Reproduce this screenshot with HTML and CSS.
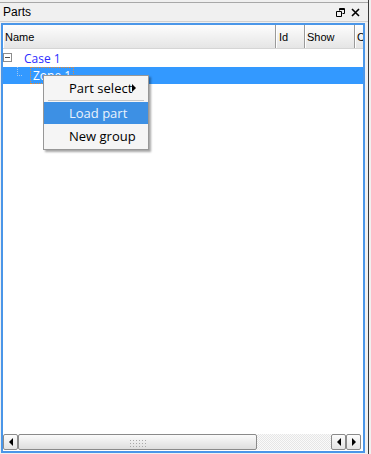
FILE: index.html
```html
<!DOCTYPE html>
<html lang="en">
<head>
    <meta charset="UTF-8">
    <title>Parts</title>
    <link rel="stylesheet" href="styles.css">
</head>
<body>
    <div class="window">
        <div class="titlebar">
            <span class="title">Parts</span>
            <span class="title-btns">
                <svg width="9" height="9" viewBox="0 0 9 9"><path d="M3.5 0.5h5v5h-2M3.5 0.5v2M0.5 3.5h5v5h-5z M3.5 1.5h5" fill="none" stroke="#000" stroke-width="1"/></svg>
                <svg width="9" height="9" viewBox="0 0 9 9"><path d="M1 1L8 8M8 1L1 8" stroke="#000" stroke-width="1.6"/></svg>
            </span>
        </div>
        <div class="panel">
            <div class="header">
                <div class="col col-name">Name</div>
                <div class="col col-id">Id</div>
                <div class="col col-show">Show</div>
                <div class="col col-c">C</div>
            </div>
            <div class="tree">
                <div class="row">
                    <span class="expander"></span>
                    <span class="case">Case 1</span>
                </div>
                <div class="row selected">
                    <span class="branch"></span>
                    <span class="focus">Zone 1</span>
                </div>
            </div>
            <div class="hscroll">
                <div class="sbtn"><span class="arr-left"></span></div>
                <div class="thumb"><span class="grip"></span></div>
                <div class="track"></div>
                <div class="sbtn"><span class="arr-left"></span></div>
                <div class="sbtn"><span class="arr-right"></span></div>
            </div>
        </div>
    </div>

    <div class="menu">
        <div class="item">Part select<span class="sub"></span></div>
        <div class="sep"></div>
        <div class="item active">Load part</div>
        <div class="item last">New group</div>
    </div>
</body>
</html>
```

FILE: styles.css
```css
body {
    margin: 0;
    background-color: #f0f0f0;
    font-family: "Liberation Sans", Arial, sans-serif;
    font-size: 11px;
}
.window {
    width: 368px;
    height: 454px;
    border-right: 1px solid #3a3a3a;
    box-sizing: content-box;
    padding-top: 2px;
}
.titlebar {
    height: 18px;
    border-top: 1px solid #a8a8a8;
    border-bottom: 1px solid #d0d0d0;
    display: flex;
    align-items: center;
    justify-content: space-between;
    padding: 0 8px 0 3px;
}
.title {
    font-size: 12px;
}
.title-btns {
    display: flex;
    gap: 6px;
    padding-top: 1px;
}
.panel {
    margin: 1px 3px 0 1px;
    height: 425px;
    border: 2px solid #4a96e8;
    background: #fff;
    display: flex;
    flex-direction: column;
    padding-bottom: 1px;
    overflow: hidden;
}
.header {
    display: flex;
    height: 23px;
    border-bottom: 1px solid #d5d5d5;
    background: linear-gradient(#fdfdfd, #f1f1f1 50%, #e5e5e5);
}
.col {
    display: flex;
    align-items: center;
    padding-left: 2px;
    border-right: 1px solid #9a9a9a;
    box-shadow: inset 1px 0 #ffffff;
    flex-shrink: 0;
}
.col-name { width: 270px; }
.col-id { width: 25px; padding-left: 3px; }
.col-show { width: 47px; }
.col-c { width: 20px; border-right: none; }
.tree {
    flex: 1;
    padding-top: 1px;
    font-family: "Open Sans", "Noto Sans", sans-serif;
    font-size: 12px;
}
.row {
    height: 17px;
    display: flex;
    align-items: center;
    position: relative;
}
.expander {
    width: 7px;
    height: 7px;
    border: 1px solid #8c8c8c;
    margin-top: -3px;
    display: flex;
    align-items: center;
    justify-content: center;
}
.expander::before {
    content: "";
    width: 5px;
    height: 1px;
    background: #505050;
}
.case {
    color: #2d2dff;
    margin-left: 12px;
}
.row.selected {
    background: #3399ff;
    color: #fff;
}
.branch {
    width: 4px;
    height: 8px;
    margin-left: 14px;
    margin-top: -9px;
    border-left: 1px dotted #9fc6f0;
    border-bottom: 1px dotted #9fc6f0;
}
.focus {
    margin-left: 8px;
    padding: 0 2px;
    height: 15px;
    line-height: 15px;
    border: 1px dotted #e08a3a;
}
.hscroll {
    height: 16px;
    display: flex;
}
.sbtn {
    width: 13px;
    height: 14px;
    border: 1px solid #8a8a8a;
    border-radius: 2px;
    background: linear-gradient(#fcfcfc, #e4e4e4);
    display: flex;
    align-items: center;
    justify-content: center;
}
.arr-left {
    border-right: 4px solid #000;
    border-top: 4px solid transparent;
    border-bottom: 4px solid transparent;
}
.arr-right {
    border-left: 4px solid #000;
    border-top: 4px solid transparent;
    border-bottom: 4px solid transparent;
}
.thumb {
    width: 237px;
    height: 14px;
    border: 1px solid #8a8a8a;
    border-radius: 2px;
    background: linear-gradient(#fbfbfb, #ececec 50%, #dedede);
    display: flex;
    align-items: center;
    justify-content: center;
}
.grip {
    width: 18px;
    height: 8px;
    margin-top: 1px;
    background-image: radial-gradient(#a8a8a8 0.8px, transparent 0.9px);
    background-size: 3px 3px;
}
.track {
    width: 74px;
    background: repeating-conic-gradient(#e6e6e6 0 25%, #fafafa 0 50%) 0 0 / 2px 2px;
}
.menu {
    position: absolute;
    left: 43px;
    top: 75px;
    width: 104px;
    padding: 1px 0;
    background: #f5f5f5;
    border: 1px solid #979797;
    box-shadow: 2px 2px 2px rgba(0, 0, 0, 0.35);
    font-family: "Open Sans", "Noto Sans", sans-serif;
    font-size: 13px;
}
.item {
    height: 22px;
    line-height: 22px;
    padding-left: 25px;
    position: relative;
    color: #000;
}
.item.active {
    background: #3d90e4;
    color: #eaf3fc;
}
.item.last {
    height: 23px;
    line-height: 23px;
    margin-top: 1px;
}
.sub {
    position: absolute;
    left: 88px;
    top: 7px;
    border-left: 4px solid #000;
    border-top: 4px solid transparent;
    border-bottom: 4px solid transparent;
}
.sep {
    height: 1px;
    background: #c6c6c6;
    margin: 1px 4px 1px 4px;
}
```
